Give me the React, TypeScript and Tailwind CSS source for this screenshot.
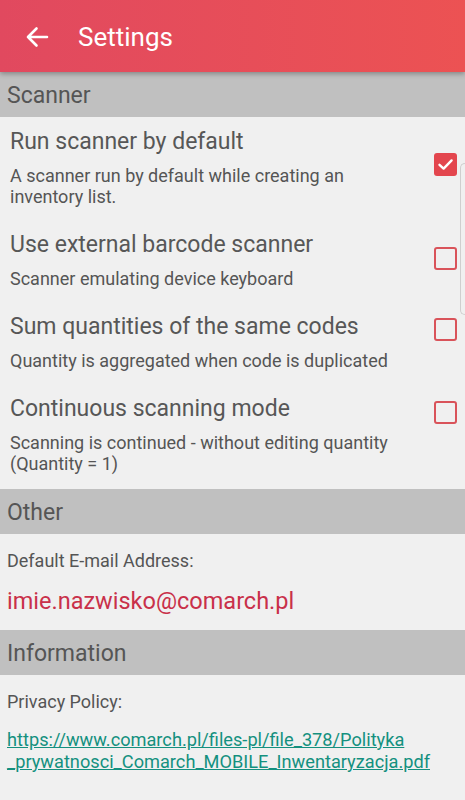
import React from 'react'

type Pref = {
  title: string
  summary: string
  checked: boolean
  boxTop: string
}

const prefs: Pref[] = [
  {
    title: 'Run scanner by default',
    summary: 'A scanner run by default while creating an inventory list.',
    checked: true,
    boxTop: 'mt-[24px]',
  },
  {
    title: 'Use external barcode scanner',
    summary: 'Scanner emulating device keyboard',
    checked: false,
    boxTop: 'mt-[15px]',
  },
  {
    title: 'Sum quantities of the same codes',
    summary: 'Quantity is aggregated when code is duplicated',
    checked: false,
    boxTop: 'mt-[4px]',
  },
  {
    title: 'Continuous scanning mode',
    summary: 'Scanning is continued - without editing quantity (Quantity = 1)',
    checked: false,
    boxTop: 'mt-[5px]',
  },
]

function Checkbox({ checked }: { checked: boolean }) {
  if (checked) {
    return (
      <div className="w-[23px] h-[23px] rounded-[3px] bg-[#e3464e] flex items-center justify-center">
        <svg width="23" height="23" viewBox="0 0 23 23" fill="none">
          <path d="M5.5 11.8 L9.6 15.6 L17.6 7.4" stroke="#fff" strokeWidth="2.4" strokeLinecap="round" strokeLinejoin="round" />
        </svg>
      </div>
    )
  }
  return <div className="w-[23px] h-[23px] rounded-[3px] border-[2.5px] border-[#d9535a]" />
}

function SectionHeader({ label }: { label: string }) {
  return (
    <div className="h-[45px] bg-[#c0c0c0] flex items-center pl-[7px] pt-[3px] text-[23px] text-[#555555]">
      {label}
    </div>
  )
}

export default function App() {
  return (
    <div className="relative w-[465px] h-[800px] overflow-hidden bg-[#f0f0f0] font-['Roboto',sans-serif]">
      <header className="relative z-10 h-[72px] flex items-center bg-gradient-to-r from-[#e1495f] to-[#ec5253] shadow-[0_2px_5px_rgba(0,0,0,0.3)]">
        <div className="w-[78px] flex justify-center pr-[5px] pt-[1px]">
          <svg width="24" height="22" viewBox="0 0 24 22" fill="none">
            <path d="M22 11 H3 M11.5 2.5 L3 11 L11.5 19.5" stroke="#fff" strokeWidth="2.6" strokeLinecap="round" strokeLinejoin="round" />
          </svg>
        </div>
        <h1 className="text-[26px] text-white pt-[3px]">Settings</h1>
      </header>

      <SectionHeader label="Scanner" />

      {prefs.map((p) => (
        <div key={p.title} className="flex pl-[10px] pr-[8px] pt-[12px] pb-[13px]">
          <div className="flex-1 min-w-0">
            <div className="text-[23px] leading-[26px] text-[#575757]">{p.title}</div>
            <div className="mt-[10px] text-[18px] leading-[21px] text-[#555555]">{p.summary}</div>
          </div>
          <div className={`ml-[14px] ${p.boxTop}`}>
            <Checkbox checked={p.checked} />
          </div>
        </div>
      ))}

      <div className="h-[2px]" />
      <SectionHeader label="Other" />
      <div className="px-[7px] pt-[16px] pb-[16px]">
        <div className="text-[18px] leading-[21px] text-[#555555]">Default E-mail Address:</div>
        <div className="mt-[17px] text-[23.5px] leading-[26px] text-[#c9304a]">imie.nazwisko@comarch.pl</div>
      </div>

      <SectionHeader label="Information" />
      <div className="px-[7px] pt-[16px]">
        <div className="text-[18px] leading-[21px] text-[#555555]">Privacy Policy:</div>
        <a className="block mt-[17px] text-[18.2px] leading-[22px] text-[#14907f] underline">
          https://www.comarch.pl/files-pl/file_378/Polityka
          <br />
          _prywatnosci_Comarch_MOBILE_Inwentaryzacja.pdf
        </a>
      </div>

      <div className="absolute right-0 top-[163px] w-[5px] h-[152px] rounded-l-[6px] border border-r-0 border-[#cfcfcf]" />
    </div>
  )
}
